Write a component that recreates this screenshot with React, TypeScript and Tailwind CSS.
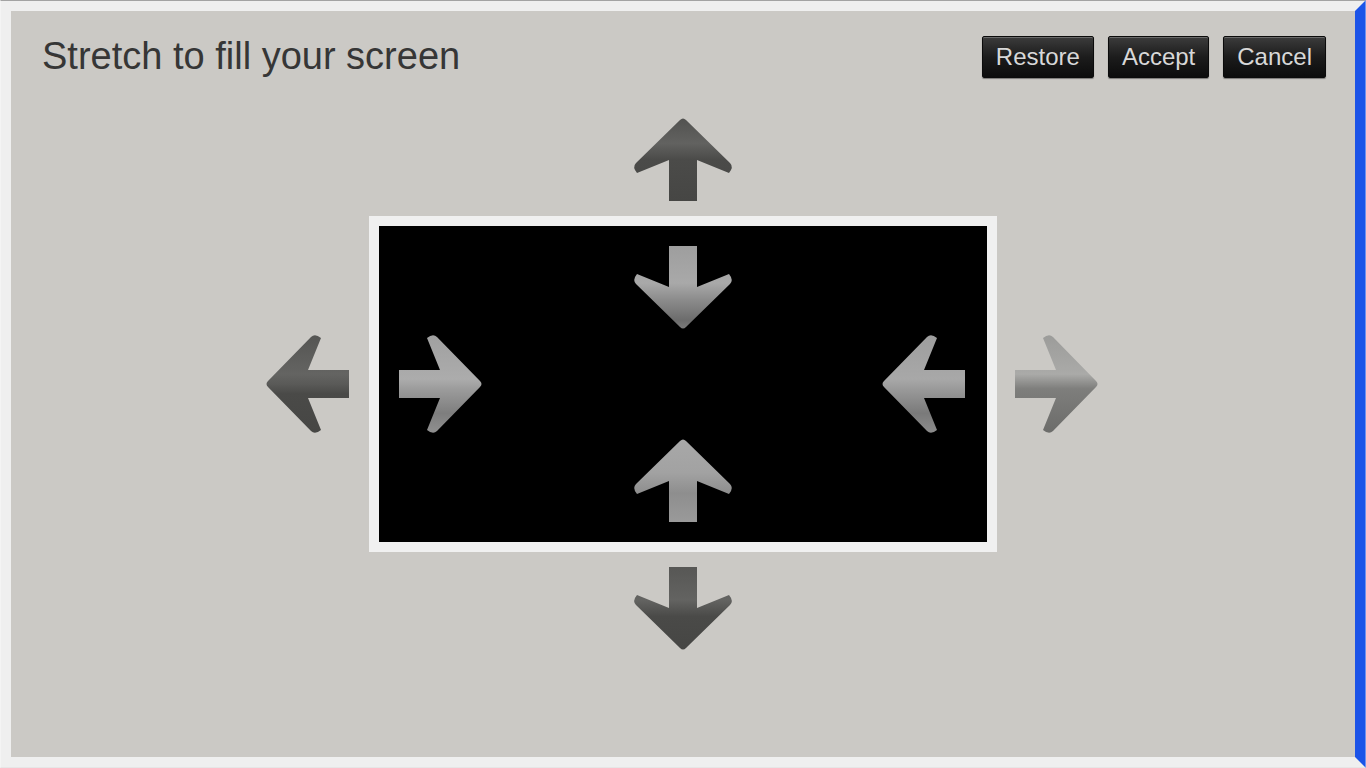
import { useId } from "react";

type Dir = "up" | "down" | "left" | "right";
type Stop = [string, string];

// base arrow points up, drawn in a 100 x 84 box
const BASE: [string, number[]][] = [
  ["M", [53, 3]],
  ["L", [97, 46]],
  ["Q", [101, 50, 96, 56]],
  ["L", [64, 43]],
  ["L", [64, 84]],
  ["L", [36, 84]],
  ["L", [36, 43]],
  ["L", [4, 56]],
  ["Q", [-1, 50, 3, 46]],
  ["L", [47, 3]],
  ["Q", [50, 0, 53, 3]],
];

const mapPoint = (dir: Dir, x: number, y: number): [number, number] => {
  if (dir === "down") return [100 - x, 84 - y];
  if (dir === "right") return [84 - y, x];
  if (dir === "left") return [y, 100 - x];
  return [x, y];
};

const arrowPath = (dir: Dir) =>
  BASE.map(([cmd, nums]) => {
    const out: number[] = [];
    for (let i = 0; i < nums.length; i += 2) {
      out.push(...mapPoint(dir, nums[i], nums[i + 1]));
    }
    return cmd + " " + out.join(" ");
  }).join(" ") + " Z";

const Arrow = ({ dir, stops }: { dir: Dir; stops: Stop[] }) => {
  const id = useId().replace(/:/g, "");
  const horizontal = dir === "left" || dir === "right";
  const w = horizontal ? 84 : 100;
  const h = horizontal ? 100 : 84;
  return (
    <svg
      width={w}
      height={h}
      viewBox={`0 0 ${w} ${h}`}
      className="block overflow-visible"
    >
      <defs>
        <linearGradient id={`g${id}`} x1="0" y1="0" x2="0" y2="1">
          {stops.map(([off, col]) => (
            <stop key={off} offset={off} stopColor={col} />
          ))}
        </linearGradient>
      </defs>
      <path d={arrowPath(dir)} fill={`url(#g${id})`} />
    </svg>
  );
};

const Button = ({ label }: { label: string }) => (
  <button
    type="button"
    className="h-[42px] px-[13px] flex items-center border border-[#0b0b0b] rounded-[2px] bg-gradient-to-b from-[#3c3c3c] via-[#1c1c1c] to-[#0c0c0c] text-[24px] leading-none text-[#d8d8d8] shadow-[inset_0_1px_0_#6a6a6a,0_1px_1px_rgba(0,0,0,0.4)]"
  >
    {label}
  </button>
);

export default function App() {
  return (
    <div
      className="w-[1366px] h-[768px] border-t border-t-[#a3a3a3] border-l border-l-[#f4f4f4] border-r border-r-[#6f93ee] border-b border-b-[#e6e6e6] bg-[#efefef]"
      style={{ fontFamily: '"Liberation Sans", Arial, sans-serif' }}
    >
      <div className="h-full border-[10px] border-[#efefef] border-r-[#1b53e8]">
        <div className="h-full bg-[#cbc9c5] grid">
          {/* stage */}
          <div className="[grid-area:1/1] flex items-center justify-center">
            <div className="grid grid-cols-[84px_628px_84px] grid-rows-[84px_336px_84px] gap-x-[18px] gap-y-[15px]">
              <div />
              <div className="flex justify-center">
                <Arrow
                  dir="up"
                  stops={[
                    ["0", "#525250"],
                    ["0.3", "#626260"],
                    ["0.5", "#4b4b49"],
                    ["1", "#464644"],
                  ]}
                />
              </div>
              <div />

              <div className="flex items-center -ml-[2px]">
                <Arrow
                  dir="left"
                  stops={[
                    ["0", "#555553"],
                    ["0.4", "#646462"],
                    ["0.5", "#5a5a58"],
                    ["0.6", "#4a4a48"],
                    ["1", "#464644"],
                  ]}
                />
              </div>
              <div className="border-[10px] border-[#f0f0f0] bg-black">
                <div className="h-full p-[20px] grid grid-cols-[84px_1fr_84px] grid-rows-[84px_1fr_84px]">
                  <div />
                  <div className="flex justify-center">
                    <Arrow
                      dir="down"
                      stops={[
                        ["0", "#9e9e9e"],
                        ["0.45", "#a9a9a9"],
                        ["0.65", "#8c8c8c"],
                        ["0.9", "#6c6c6c"],
                        ["1", "#7a7a7a"],
                      ]}
                    />
                  </div>
                  <div />
                  <div className="flex items-center">
                    <Arrow
                      dir="right"
                      stops={[
                        ["0", "#a0a0a0"],
                        ["0.45", "#acacac"],
                        ["0.55", "#9c9c9c"],
                        ["0.8", "#7e7e7e"],
                        ["1", "#909090"],
                      ]}
                    />
                  </div>
                  <div />
                  <div className="flex items-center justify-end -mr-[2px] pr-[4px]">
                    <Arrow
                      dir="left"
                      stops={[
                        ["0", "#9e9e9e"],
                        ["0.45", "#a8a8a8"],
                        ["0.55", "#9a9a9a"],
                        ["0.8", "#7a7a7a"],
                        ["1", "#8c8c8c"],
                      ]}
                    />
                  </div>
                  <div />
                  <div className="flex justify-center items-end">
                    <Arrow
                      dir="up"
                      stops={[
                        ["0", "#a8a8a8"],
                        ["0.4", "#a2a2a2"],
                        ["0.65", "#8e8e8e"],
                        ["1", "#9a9a9a"],
                      ]}
                    />
                  </div>
                  <div />
                </div>
              </div>
              <div className="flex items-center">
                <Arrow
                  dir="right"
                  stops={[
                    ["0", "#9c9c9a"],
                    ["0.4", "#aaaaa8"],
                    ["0.55", "#7e7e7c"],
                    ["1", "#6c6c6a"],
                  ]}
                />
              </div>

              <div />
              <div className="flex justify-center items-end">
                <Arrow
                  dir="down"
                  stops={[
                    ["0", "#575755"],
                    ["0.4", "#636361"],
                    ["0.6", "#4a4a48"],
                    ["1", "#464644"],
                  ]}
                />
              </div>
              <div />
            </div>
          </div>

          {/* header */}
          <div className="[grid-area:1/1] self-start flex items-start justify-between pl-[31px] pr-[29px] pt-[25px]">
            <h1 className="mt-[1px] text-[38px] leading-none text-[#363636]">
              Stretch to fill your screen
            </h1>
            <div className="flex gap-[14px]">
              <Button label="Restore" />
              <Button label="Accept" />
              <Button label="Cancel" />
            </div>
          </div>
        </div>
      </div>
    </div>
  );
}
